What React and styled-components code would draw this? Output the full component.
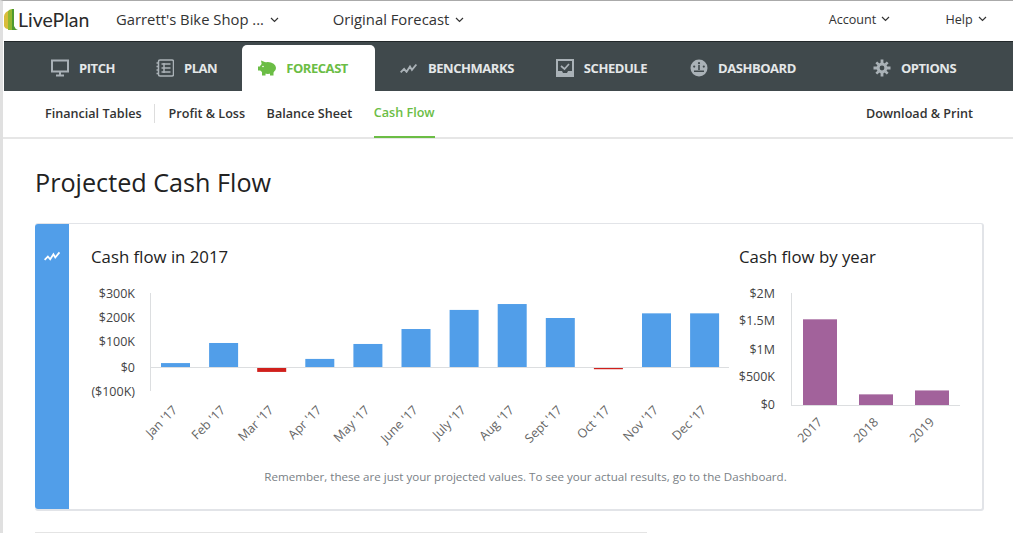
import React from 'react';
import styled, { createGlobalStyle } from "styled-components"

const FONT = `"Open Sans", "Liberation Sans", sans-serif`

const MONTHS = [
    ["Jan '17", 16], ["Feb '17", 98], ["Mar '17", -16], ["Apr '17", 33],
    ["May '17", 94], ["June '17", 155], ["July '17", 233], ["Aug '17", 257],
    ["Sept '17", 200], ["Oct '17", -5], ["Nov '17", 219], ["Dec '17", 219],
]
const YEARS = [["2017", 1.53], ["2018", 0.19], ["2019", 0.26]]

const Chevron = () => (
    <ChevronSvg viewBox="0 0 9 6" width="9" height="6">
        <path d="M1 1 L4.5 4.5 L8 1" fill="none" stroke="#333" strokeWidth="1.2" />
    </ChevronSvg>
)

const Logo = () => (
    <LogoBox>
        <svg width="14" height="21" viewBox="0 0 14 21">
            <path d="M0 7 Q1 3 4 2 V20 Q1 20 0 17 Z" fill="#d9bd3a" />
            <path d="M4 2 Q5 0.5 8 0 V21 H4 Z" fill="#93b82f" />
            <path d="M8 0 H10 V17 Q11 20 14 21 H8 Z" fill="#4f9a2f" />
        </svg>
        <LogoText>LivePlan</LogoText>
    </LogoBox>
)

const MonitorIcon = ({ color }) => (
    <svg width="18" height="18" viewBox="0 0 18 18" fill="none" stroke={color} strokeWidth="2">
        <rect x="1" y="1.5" width="16" height="11" />
        <path d="M9 13 V16 M5 16.5 H13" />
    </svg>
)
const NotebookIcon = ({ color }) => (
    <svg width="18" height="18" viewBox="0 0 18 18" fill="none" stroke={color} strokeWidth="1.5">
        <rect x="2.5" y="1" width="15" height="16" rx="1.5" />
        <path d="M5.5 5 H14.5 M5.5 9 H14.5 M5.5 13 H14.5 M8 4 V14" />
        <path d="M0.5 4 H3 M0.5 7.5 H3 M0.5 11 H3 M0.5 14.5 H3" />
    </svg>
)
const PiggyIcon = ({ color }) => (
    <svg width="18" height="16" viewBox="0 0 18 16" fill={color}>
        <ellipse cx="9.8" cy="8" rx="8.2" ry="6" />
        <path d="M3 0.5 L8 2.5 L4 6 Z M4 11 H7.5 V15.5 H4 Z M12 11 H15.5 V15.5 H12 Z M0 6.5 H3 V10.5 H0 Z" />
        <circle cx="5" cy="6.5" r="0.8" fill="#fff" />
    </svg>
)
const WaveIcon = ({ color, size = 18 }) => (
    <svg width={size} height={size * 0.6} viewBox="0 0 18 11" fill="none" stroke={color} strokeWidth="1.9">
        <path d="M0.5 9.5 L4 6 L6.5 9 L10 3.5 L12 7 L16.5 1.5" />
    </svg>
)
const ScheduleIcon = ({ color }) => (
    <svg width="18" height="18" viewBox="0 0 18 18" fill={color}>
        <path fillRule="evenodd" d="M0 0 H18 V18 H0 Z M2 2 V12 H6 L7 14 H11 L12 12 H16 V2 Z" />
        <path d="M5 7 L8.5 10 L13 5" fill="none" stroke={color} strokeWidth="1.7" />
    </svg>
)
const DashIcon = ({ color }) => (
    <svg width="18" height="18" viewBox="0 0 18 18" fill={color}>
        <circle cx="9" cy="9" r="8.5" />
        <g fill="#40494c">
            <circle cx="4.2" cy="7.6" r="1.1" />
            <circle cx="13.8" cy="7.6" r="1.1" />
            <circle cx="9" cy="4.2" r="1.1" />
            <path d="M8.2 6 H9.8 V11 H8.2 Z M4 11.5 H14 V13 H4 Z" />
        </g>
    </svg>
)
const GearIcon = ({ color }) => (
    <svg width="18" height="18" viewBox="0 0 18 18" fill={color}>
        <path fillRule="evenodd" d="M9 3.6 A5.4 5.4 0 1 1 9 14.4 A5.4 5.4 0 1 1 9 3.6 Z M9 6.6 A2.4 2.4 0 1 0 9 11.4 A2.4 2.4 0 1 0 9 6.6 Z" />
        <path d="M7.6 0.5 H10.4 V4 H7.6 Z M7.6 14 H10.4 V17.5 H7.6 Z M0.5 7.6 H4 V10.4 H0.5 Z M14 7.6 H17.5 V10.4 H14 Z" />
        <path d="M2.4 4.2 L4.2 2.4 L6.4 4.6 L4.6 6.4 Z M13.8 2.4 L15.6 4.2 L13.4 6.4 L11.6 4.6 Z M2.4 13.8 L4.6 11.6 L6.4 13.4 L4.2 15.6 Z M11.6 13.4 L13.4 11.6 L15.6 13.8 L13.8 15.6 Z" />
    </svg>
)

const TABS = [
    { label: "PITCH", Icon: MonitorIcon, left: 47 },
    { label: "PLAN", Icon: NotebookIcon, left: 41 },
    { label: "FORECAST", Icon: PiggyIcon, left: 25, active: true },
    { label: "BENCHMARKS", Icon: WaveIcon, left: 25 },
    { label: "SCHEDULE", Icon: ScheduleIcon, left: 42 },
    { label: "DASHBOARD", Icon: DashIcon, left: 43 },
    { label: "OPTIONS", Icon: GearIcon, left: 77 },
]

const CashFlowChart = () => {
    const zero = 84
    const perK = 0.245
    return (
        <ChartSvg width="640" height="170" viewBox="0 0 640 170">
            {[["$300K", 10], ["$200K", 34], ["$100K", 58], ["$0", 84], ["($100K)", 108]].map(([t, y]) => (
                <AxisText key={t} x="44" y={y} dy="4.5" textAnchor="end">{t}</AxisText>
            ))}
            <line x1="59.5" x2="59.5" y1="10" y2="108" stroke="#dcdee0" />
            <line x1="59" x2="638" y1={zero + 0.5} y2={zero + 0.5} stroke="#dcdee0" />
            {MONTHS.map(([m, v], i) => {
                const h = Math.abs(v) * perK
                const x = 70 + i * 48.1
                return (
                    <g key={m}>
                        <rect x={x} y={v > 0 ? zero - h : zero + 1} width="29" height={h}
                            fill={v > 0 ? "#519ee9" : "#d0201c"} />
                        <TickText textAnchor="end"
                            transform={`translate(${x + 17},${zero + 44}) rotate(-45)`}>{m}</TickText>
                    </g>
                )
            })}
        </ChartSvg>
    )
}

const YearChart = () => {
    const zero = 122
    return (
        <ChartSvg width="240" height="170" viewBox="0 0 240 170">
            {[["$2M", 10], ["$1.5M", 37], ["$1M", 66], ["$500K", 93], ["$0", 121]].map(([t, y]) => (
                <AxisText key={t} x="36" y={y} dy="4.5" textAnchor="end">{t}</AxisText>
            ))}
            <line x1="52.5" x2="52.5" y1="10" y2={zero} stroke="#dcdee0" />
            <line x1="52" x2="221" y1={zero + 0.5} y2={zero + 0.5} stroke="#dcdee0" />
            {YEARS.map(([y, v], i) => {
                const h = v * 56
                const x = 64 + i * 56
                return (
                    <g key={y}>
                        <rect x={x} y={zero - h} width="34" height={h} fill="#a2629b" />
                        <TickText textAnchor="end"
                            transform={`translate(${x + 20},${zero + 18}) rotate(-45)`}>{y}</TickText>
                    </g>
                )
            })}
        </ChartSvg>
    )
}

const App = () => (
    <Page>
        <GlobalStyle />
        <TopBar>
            <Logo />
            <Picker $left={18}>Garrett's Bike Shop ... <Chevron /></Picker>
            <Picker $left={54}>Original Forecast <Chevron /></Picker>
            <TopRight>
                <TopLink>Account <Chevron /></TopLink>
                <TopLink>Help <Chevron /></TopLink>
            </TopRight>
        </TopBar>
        <MainNav>
            {TABS.map(({ label, Icon, left, active }) => (
                <Tab key={label} $active={active} $left={left}>
                    <Icon color={active ? "#6bbd45" : "#aab2b7"} />
                    {label}
                </Tab>
            ))}
        </MainNav>
        <SubNav>
            <SubLink $divider>Financial Tables</SubLink>
            <SubLink>Profit &amp; Loss</SubLink>
            <SubLink>Balance Sheet</SubLink>
            <SubLink $active>Cash Flow</SubLink>
            <SubRight>Download &amp; Print</SubRight>
        </SubNav>
        <Content>
            <Title>Projected Cash Flow</Title>
            <Card>
                <Strip><WaveIcon color="#fff" size={17} /></Strip>
                <CardBody>
                    <Charts>
                        <div>
                            <ChartTitle>Cash flow in 2017</ChartTitle>
                            <CashFlowChart />
                        </div>
                        <YearBlock>
                            <ChartTitle>Cash flow by year</ChartTitle>
                            <YearChart />
                        </YearBlock>
                    </Charts>
                    <Note>Remember, these are just your projected values. To see your actual results, go to the Dashboard.</Note>
                </CardBody>
            </Card>
            <NextCard />
        </Content>
    </Page>
)

const GlobalStyle = createGlobalStyle`
html, body {
    margin: 0;
    height: 533px;
    overflow: hidden;
    background: #fff;
}
`

const Page = styled.div`
font-family: ${FONT};
color: #333;
height: 532px;
border-top: 1px solid #aaa;
border-left: 3px solid #e0e0e0;
overflow: hidden;
`

const TopBar = styled.div`
display: flex;
align-items: center;
height: 40px;
padding-left: 1px;
`

const LogoBox = styled.div`
display: flex;
align-items: center;
width: 94px;
height: 21px;
margin-top: -4px;
`

const LogoText = styled.span`
font-family: Lato, sans-serif;
font-size: 19.5px;
color: #2a2a2a;
margin-left: 0;
`

const ChevronSvg = styled.svg`
margin-left: 2px;
vertical-align: 2px;
`

const Picker = styled.div`
font-size: 14.8px;
margin-left: ${p => p.$left}px;
margin-top: -4px;
white-space: nowrap;
`

const TopRight = styled.div`
margin-left: auto;
margin-top: -4px;
display: flex;
gap: 55px;
padding-right: 26px;
`

const TopLink = styled.div`
font-size: 12.6px;
`

const MainNav = styled.nav`
display: flex;
align-items: stretch;
height: 50px;
padding-top: 3px;
margin-left: 1px;
box-sizing: border-box;
background: #40494c;
border-top: 1px solid #22282a;
`

const Tab = styled.div`
display: flex;
align-items: center;
gap: 10px;
margin-left: ${p => p.$left}px;
font-size: 13px;
font-weight: 700;
letter-spacing: -0.45px;
color: ${p => p.$active ? "#6bbd45" : "#e4e7e8"};
${p => p.$active && `
    background: #fff;
    border-radius: 5px 5px 0 0;
    padding: 0 27px 0 16px;
`}
`

const SubNav = styled.div`
display: flex;
align-items: stretch;
height: 48px;
padding: 0 40px 0 42px;
box-sizing: border-box;
border-bottom: 2px solid #e6e6e6;
`

const SubLink = styled.div`
display: flex;
align-items: center;
height: 44px;
margin-right: 21.5px;
font-size: 12.6px;
font-weight: 600;
white-space: nowrap;
position: relative;
box-sizing: border-box;
color: ${p => p.$active ? "#6bbd45" : "#333"};
${p => p.$active && `
    height: 47px;
    padding-bottom: 3px;
    border-bottom: 2px solid #6bbd45;
`}
${p => p.$divider && `
    margin-right: 14px;
    padding-right: 13px;
    &::after {
        content: "";
        position: absolute;
        right: 0;
        top: 13px;
        height: 19px;
        width: 1px;
        background: #ddd;
    }
`}
`

const SubRight = styled(SubLink)`
margin: 0 0 0 auto;
`

const Content = styled.main`
padding: 0 29px 0 32px;
`

const Title = styled.h1`
font-size: 25.2px;
line-height: 32px;
font-weight: 400;
color: #222;
margin: 27px 0 25px;
`

const Card = styled.section`
display: flex;
height: 288px;
box-sizing: border-box;
border: 1px solid #e2e4e8;
border-bottom-width: 2px;
border-right-width: 2px;
border-left: none;
border-radius: 3px;
`

const Strip = styled.div`
width: 34px;
flex: none;
background: #519ee9;
border-radius: 3px 0 0 3px;
display: flex;
justify-content: center;
padding-top: 27px;
box-sizing: border-box;
`

const CardBody = styled.div`
flex: 1;
display: flex;
flex-direction: column;
padding: 21px 0 0 22px;
`

const Charts = styled.div`
display: flex;
`

const YearBlock = styled.div`
margin-left: 8px;
`

const ChartTitle = styled.h2`
font-size: 16.8px;
line-height: 24px;
font-weight: 400;
color: #222;
margin: 0 0 14px;
`

const ChartSvg = styled.svg`
display: block;
`

const AxisText = styled.text`
font-family: ${FONT};
font-size: 12.5px;
fill: #444;
`

const TickText = styled(AxisText)`
fill: #666;
`

const Note = styled.p`
margin: 16px 0 0 -22px;
text-align: center;
font-size: 11.6px;
color: #7a8186;
`

const NextCard = styled.div`
width: 612px;
margin-top: 21px;
border-top: 1px solid #e4e4e4;
`

export default App
